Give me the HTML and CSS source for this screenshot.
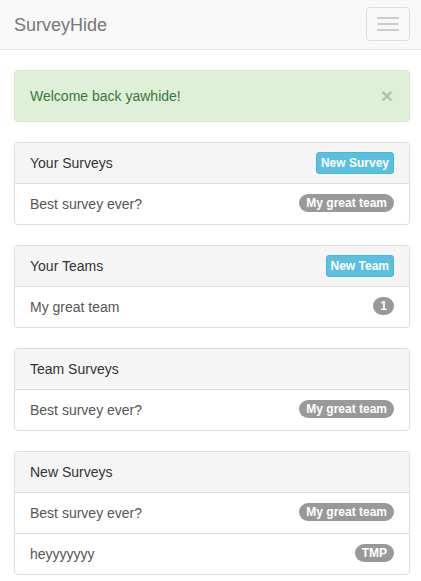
FILE: index.html
```html
<!DOCTYPE html>
<html>
<head>
<meta charset="utf-8">
<link rel="stylesheet" href="styles.css">
</head>
<body>
<nav class="navbar">
  <span class="brand">SurveyHide</span>
  <button class="toggle"><span class="bar"></span><span class="bar"></span><span class="bar"></span></button>
</nav>
<main class="container">
  <div class="alert">
    <span>Welcome back yawhide!</span>
    <span class="close">×</span>
  </div>

  <section class="panel">
    <div class="panel-heading"><span>Your Surveys</span><span class="btn">New Survey</span></div>
    <div class="item"><span>Best survey ever?</span><span class="badge">My great team</span></div>
  </section>

  <section class="panel">
    <div class="panel-heading"><span>Your Teams</span><span class="btn">New Team</span></div>
    <div class="item"><span>My great team</span><span class="badge">1</span></div>
  </section>

  <section class="panel">
    <div class="panel-heading"><span>Team Surveys</span></div>
    <div class="item"><span>Best survey ever?</span><span class="badge">My great team</span></div>
  </section>

  <section class="panel">
    <div class="panel-heading"><span>New Surveys</span></div>
    <div class="item"><span>Best survey ever?</span><span class="badge">My great team</span></div>
    <div class="item"><span>heyyyyyyy</span><span class="badge">TMP</span></div>
  </section>
</main>
</body>
</html>
```

FILE: styles.css
```css
* { box-sizing: border-box; }
html, body { margin: 0; background: #fff; }
body {
  font-family: "Liberation Sans", Arial, Helvetica, sans-serif;
  font-size: 14px;
  line-height: 20px;
  color: #333;
}
.navbar {
  height: 50px;
  background: #f8f8f8;
  border-bottom: 1px solid #e7e7e7;
  display: flex;
  align-items: flex-start;
  justify-content: space-between;
  padding: 0 11px 0 14px;
}
.brand {
  font-size: 18px;
  line-height: 20px;
  color: #777;
  padding-top: 15px;
}
.toggle {
  margin-top: 7px;
  width: 44px;
  height: 34px;
  padding: 9px 10px;
  border: 1px solid #ddd;
  border-radius: 4px;
  background: transparent;
  display: flex;
  flex-direction: column;
  gap: 4px;
}
.bar {
  display: block;
  width: 22px;
  height: 2px;
  border-radius: 1px;
  background: #ccc;
}
.container {
  padding: 20px 11px 0 14px;
}
.alert {
  height: 52px;
  padding: 15px 16px 15px 15px;
  background: #dff0d8;
  border: 1px solid #d6e9c6;
  border-radius: 4px;
  color: #3c763d;
  display: flex;
  justify-content: space-between;
  align-items: center;
  margin-bottom: 20px;
}
.close {
  font-size: 21px;
  font-weight: bold;
  line-height: 1;
  color: #000;
  opacity: 0.2;
  margin-top: -2px;
}
.panel {
  border: 1px solid #ddd;
  border-radius: 4px;
  margin-bottom: 20px;
  background: #fff;
  overflow: hidden;
}
.panel-heading {
  height: 41px;
  padding: 10px 15px;
  background: #f5f5f5;
  border-bottom: 1px solid #ddd;
  color: #333;
  display: flex;
  justify-content: space-between;
  align-items: center;
}
.btn {
  font-size: 12px;
  font-weight: bold;
  line-height: 18px;
  padding: 1px 4px;
  color: #fff;
  background: #5bc0de;
  border: 1px solid #46b8da;
  border-radius: 3px;
}
.item {
  height: 40px;
  padding: 10px 15px;
  color: #555;
  display: flex;
  justify-content: space-between;
  align-items: center;
}
.item + .item { height: 41px; border-top: 1px solid #ddd; }
.badge {
  font-size: 12px;
  font-weight: bold;
  line-height: 12px;
  padding: 3px 7px;
  min-width: 10px;
  color: #fff;
  background: #999;
  border-radius: 10px;
  margin-top: -2px;
}
```
